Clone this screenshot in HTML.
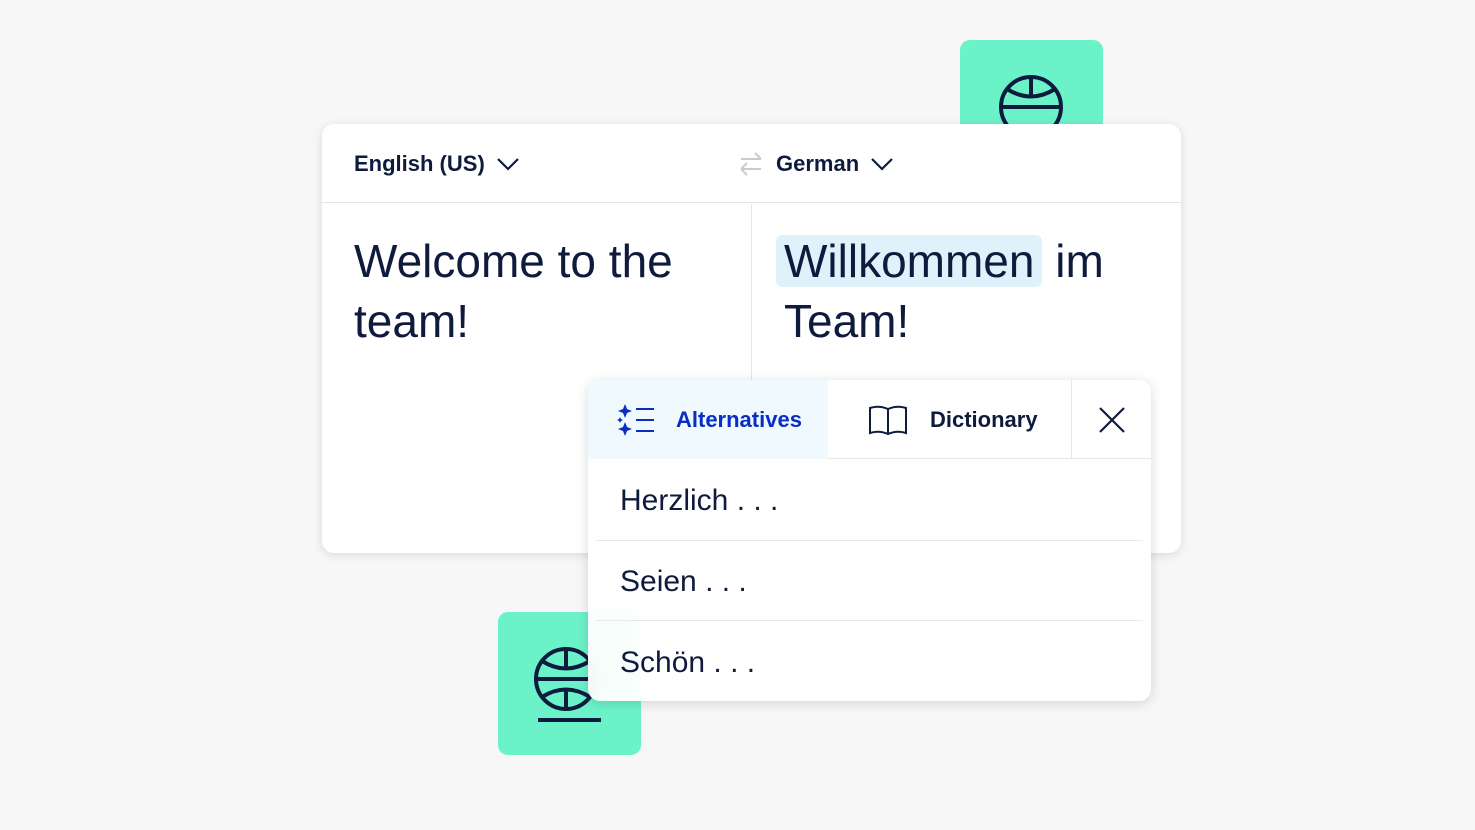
<!DOCTYPE html>
<html><head><meta charset="utf-8"><style>
*{margin:0;padding:0;box-sizing:border-box}
body{width:1475px;height:830px;background:#f7f7f7;font-family:"Liberation Sans",sans-serif;color:#0f1b3d;position:relative;overflow:hidden}
.tile{position:absolute;background:#6cf2c9;border-radius:10px}
.card{position:absolute;left:322px;top:124px;width:859px;height:429px;background:#fff;border-radius:12px;box-shadow:0 2px 10px rgba(0,0,0,.12)}
.hdr{height:79px;border-bottom:1px solid #e2e4e8;position:relative}
.lang{position:absolute;top:27px;font-size:22px;font-weight:bold;color:#0f1b3d;display:flex;align-items:center;gap:12px}
.vdiv{position:absolute;left:429px;top:80px;bottom:0;width:1px;background:#e2e4e8}
.big{position:absolute;font-size:46px;line-height:60px;color:#0f1b3d}
.hl{background:#dff2fb;border-radius:6px;padding:0 8px}
.pop{position:absolute;left:588px;top:380px;width:563px;height:321px;background:rgba(255,255,255,.94);backdrop-filter:blur(6px);border-radius:12px;box-shadow:0 2px 12px rgba(0,0,0,.15);overflow:hidden}
.tabs{height:79px;border-bottom:1px solid #e6e8ec;position:relative}
.t1{position:absolute;left:0;top:0;width:240px;height:79px;background:#f0f9fe;display:flex;align-items:center;gap:20px;padding-left:28px;font-size:22px;font-weight:bold;color:#0a2ec2}
.t2{position:absolute;left:280px;top:0;height:79px;display:flex;align-items:center;gap:22px;font-size:22px;font-weight:bold}
.cl{position:absolute;left:483px;top:0;width:80px;height:79px;border-left:1px solid #e6e8ec;display:flex;align-items:center;justify-content:center}
.row{position:absolute;left:32px;font-size:30px;color:#0f1b3d}
.sep{position:absolute;left:8px;right:8px;height:1px;background:#e6e8ec}
</style></head><body>
<div class="tile" style="left:960px;top:40px;width:143px;height:120px">
<svg width="143" height="120" style="position:absolute;left:0;top:0" fill="none" stroke="#0f1b3d" stroke-width="4">
<circle cx="71" cy="67" r="30"/><line x1="41" y1="67" x2="101" y2="67"/><path d="M47 49 Q71 64 95 49"/><line x1="71" y1="37" x2="71" y2="56"/></svg></div>
<div class="tile" style="left:498px;top:612px;width:143px;height:143px">
<svg width="143" height="143" style="position:absolute;left:0;top:0" fill="none" stroke="#0f1b3d" stroke-width="4">
<circle cx="68" cy="67" r="30"/><line x1="38" y1="67" x2="98" y2="67"/><path d="M44 49 Q68 64 92 49"/><path d="M44 85 Q68 70 92 85"/><line x1="68" y1="37" x2="68" y2="56"/><line x1="68" y1="78" x2="68" y2="97"/><line x1="40" y1="108" x2="103" y2="108"/></svg></div>
<div class="card">
<div class="hdr">
<div class="lang" style="left:32px">English (US) <svg width="22" height="14" fill="none" stroke="#0f1b3d" stroke-width="2.2"><path d="M1 2 L11 12 L21 2"/></svg></div>
<svg style="position:absolute;left:416px;top:26px" width="26" height="28" fill="none" stroke="#c8ccd2" stroke-width="2"><path d="M3 9 H23 M17 3 L23 9 M23 19 H3 M9 13 L3 19 M9 25 L3 19"/></svg>
<div class="lang" style="left:454px">German <svg width="22" height="14" fill="none" stroke="#0f1b3d" stroke-width="2.2"><path d="M1 2 L11 12 L21 2"/></svg></div>
</div>
<div class="vdiv"></div>
<div class="big" style="left:32px;top:107px">Welcome to the<br>team!</div>
<div class="big" style="left:454px;top:107px"><span class="hl">Willkommen</span> im<br><span style="margin-left:8px">Team!</span></div>
</div>
<div class="pop">
<div class="tabs">
<div class="t1"><svg width="40" height="32" fill="#0a2ec2" stroke="#0a2ec2"><path d="M9 0 L11 5 L16 7 L11 9 L9 14 L7 9 L2 7 L7 5Z" stroke="none"/><path d="M4 13 L5 15 L7 16 L5 17 L4 19 L3 17 L1 16 L3 15Z" stroke="none"/><path d="M9 18 L11 23 L16 25 L11 27 L9 32 L7 27 L2 25 L7 23Z" stroke="none"/><path d="M20 5 H38 M20 16 H38 M20 27 H38" stroke-width="2" fill="none"/></svg>Alternatives</div>
<div class="t2"><svg width="40" height="32" fill="none" stroke="#0f1b3d" stroke-width="2"><path d="M2 4 Q11 1 20 5 Q29 1 38 4 V29 Q29 26 20 30 Q11 26 2 29 Z M20 5 V30"/></svg>Dictionary</div>
<div class="cl"><svg width="28" height="28" stroke="#0f1b3d" stroke-width="2.2"><path d="M2 2 L26 26 M26 2 L2 26"/></svg></div>
</div>
<div class="row" style="top:104px">Herzlich . . .</div>
<div class="sep" style="top:160px"></div>
<div class="row" style="top:185px">Seien . . .</div>
<div class="sep" style="top:240px"></div>
<div class="row" style="top:266px">Schön . . .</div>
</div>
</body></html>
